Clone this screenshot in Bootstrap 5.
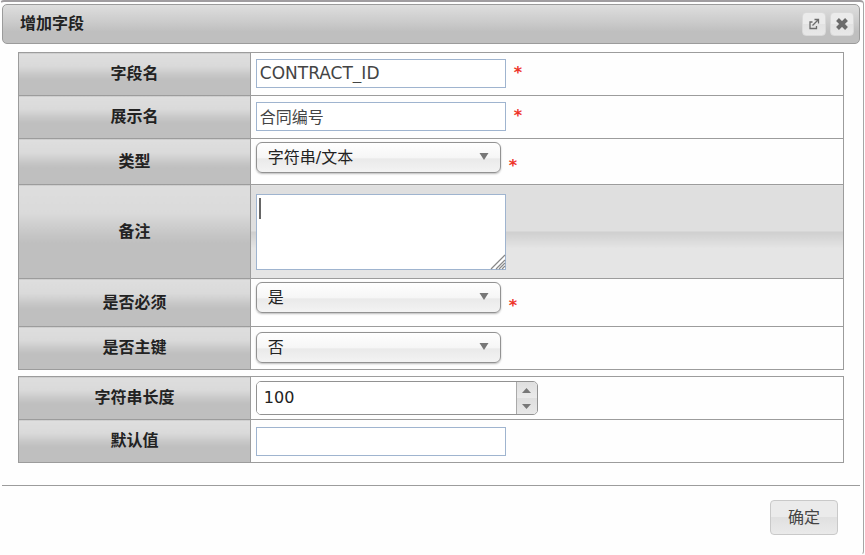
<!DOCTYPE html>
<html lang="zh-CN">
<head>
<meta charset="utf-8">
<meta name="viewport" content="width=device-width, initial-scale=1">
<title>增加字段</title>
<link href="https://cdn.jsdelivr.net/npm/bootstrap@5.3.0/dist/css/bootstrap.min.css" rel="stylesheet">
<style>
body { font-family: "DejaVu Sans", "Noto Sans CJK SC", sans-serif; font-size: 16px; line-height: 24px; color: #222; background: #fefefe; overflow: hidden; }
.dialog { border: 1px solid #a6a6a6; border-top: 2px solid #a09da0; border-left-color: #fefefe; border-bottom-color: #fefefe; border-radius: 4px; margin-right: 1px; padding: 2px 3px 19px 1px; }
.title-bar { height: 40px; padding: 0 5px 0 17px; border: 1px solid #9b9b9b; border-radius: 5px; background: linear-gradient(#dedede, #cbcbcb 45%, #bfbfbf 70%, #bfbfbf); }
.title-bar h1 { font-size: 16px; line-height: 24px; font-weight: 700; }
.icon-btn { width: 24px; height: 24px; border: 1px solid #d9d9d9; border-radius: 4px; background: linear-gradient(#ebebeb 50%, #e2e2e2 50%, #e8e8e8); }
.form-body { padding: 8px 16px 22px 16px; gap: 6px; }
.field-table { border-collapse: collapse; table-layout: fixed; color: #222; }
.field-table th, .field-table td { border: 1px solid #9c9c9c; padding: 0 5px; height: 43px; }
.field-table th { width: 28.1%; text-align: center; font-weight: 700; vertical-align: middle; background: linear-gradient(#dedede, #dadada 30%, #c8c8c8 50%, #bfbfbf 62%, #bfbfbf); }
.field-table .type-row td { height: 46px; }
.field-table .note-row td { height: 94px; background: linear-gradient(#dfdfdf 50%, #cfcfcf 50%, #e5e5e5 68%, #e5e5e5); }
.field-table .need-row td { height: 48px; }
.field-table td.cell-top { vertical-align: top; padding-top: 3px; }
.field-table td.cell-plain { padding-bottom: 2px; }
.text-field { width: 250px; height: 29px; padding: 0 3px; border: 1px solid #9fb4cf; background: #fff; color: #444; display: block; }
.latin-field { font-size: 17px; }
.note-wrap { width: 250px; }
.note-field { height: 76px; resize: none; }
.note-caret { left: 3px; top: 4px; width: 2px; height: 21px; background: #666; }
.note-grip { right: 0; bottom: 0; width: 16px; height: 16px; pointer-events: none; }
.pick-wrap { width: 245px; }
.pick { width: 100%; height: 31px; padding: 1px 30px 0 11px; border: 1px solid #929292; border-radius: 6px; appearance: none; background: linear-gradient(#fff, #f6f6f6 50%, #eaeaea 55%, #f3f3f3); box-shadow: 0 1px 2px #bbb; color: #222; display: block; }
.pick-arrow { right: 12px; top: 11px; width: 10px; height: 7px; pointer-events: none; }
.star { color: #ee3329; line-height: 24px; font-weight: 700; }
.spin { width: 282px; height: 34px; border: 1px solid #929292; border-radius: 5px; overflow: hidden; background: #fff; }
.spin input { border: 0; min-width: 0; padding: 0 7px; color: #222; background: #fff; appearance: textfield; }
.spin input::-webkit-inner-spin-button { appearance: none; }
.spin-keys { width: 21px; border-left: 1px solid #aaa; }
.spin-keys button { border: 0; background: linear-gradient(#dfdfdf, #eaeaea); }
.spin-keys button + button { background: linear-gradient(#dedede, #e8e8e8); }
.spin-keys svg, .icon-btn svg { display: block; }
.button-pane { border-top: 1px solid #9c9c9c; padding: 14px 22px 0 0; }
.ok-btn { width: 68px; height: 35px; border: 1px solid #c9c9c9; border-radius: 4px; background: linear-gradient(#ebebeb 50%, #e0e0e0 50%, #eaeaea); color: #444; padding: 0; }
</style>
<script src="https://cdn.jsdelivr.net/npm/bootstrap@5.3.0/dist/js/bootstrap.bundle.min.js"></script>
</head>
<body>
<form class="dialog">
  <header class="title-bar d-flex align-items-center">
    <h1 class="m-0 me-auto">增加字段</h1>
    <div class="d-flex gap-1">
      <button type="button" class="icon-btn p-0 d-flex align-items-center justify-content-center" aria-label="打开">
        <svg width="12" height="12" viewBox="0 0 12 12" fill="none" stroke="#6b6b6b" stroke-width="1.3"><path d="M4.500 4H2V10.500H8.500V8M4.500 7.500L10 2M6.500 1.500H10.500V5.500"/></svg>
      </button>
      <button type="button" class="icon-btn p-0 d-flex align-items-center justify-content-center" aria-label="关闭">
        <svg width="14" height="14" viewBox="0 0 14 14"><path d="M2.500 2.500L11.500 11.500M11.500 2.500L2.500 11.500" stroke="#6b6b6b" stroke-width="4"/></svg>
      </button>
    </div>
  </header>

  <div class="form-body d-flex flex-column">
    <table class="field-table w-100">
      <tr>
        <th scope="row"><label for="name">字段名</label></th>
        <td class="cell-plain"><div class="d-flex align-items-center gap-2"><input id="name" class="text-field latin-field" type="text" value="CONTRACT_ID"><span class="star">*</span></div></td>
      </tr>
      <tr>
        <th scope="row"><label for="title">展示名</label></th>
        <td class="cell-plain"><div class="d-flex align-items-center gap-2"><input id="title" class="text-field" type="text" value="合同编号"><span class="star">*</span></div></td>
      </tr>
      <tr class="type-row">
        <th scope="row"><label for="type">类型</label></th>
        <td class="cell-top"><div class="d-flex gap-2">
          <div class="pick-wrap position-relative"><select id="type" class="pick"><option>字符串/文本</option></select><svg class="pick-arrow position-absolute" viewBox="0 0 10 7"><path d="M0.500 0H9.500L5 7Z" fill="#777"/></svg></div>
          <span class="star pt-2 mt-1">*</span></div></td>
      </tr>
      <tr class="note-row">
        <th scope="row"><label for="note">备注</label></th>
        <td><div class="note-wrap position-relative"><textarea id="note" class="text-field note-field"></textarea><span class="note-caret position-absolute"></span><svg class="note-grip position-absolute" viewBox="0 0 16 16" fill="none" stroke="#888" stroke-width="1.2"><path d="M1 15L15 1M6 15L15 6M9 15L15 9M12 15L15 12"/></svg></div></td>
      </tr>
      <tr class="need-row">
        <th scope="row"><label for="need">是否必须</label></th>
        <td class="cell-top"><div class="d-flex gap-2">
          <div class="pick-wrap position-relative"><select id="need" class="pick"><option>是</option><option>否</option></select><svg class="pick-arrow position-absolute" viewBox="0 0 10 7"><path d="M0.500 0H9.500L5 7Z" fill="#777"/></svg></div>
          <span class="star pt-2 mt-1">*</span></div></td>
      </tr>
      <tr>
        <th scope="row"><label for="key">是否主键</label></th>
        <td class="cell-plain"><div class="pick-wrap position-relative"><select id="key" class="pick"><option>否</option><option>是</option></select><svg class="pick-arrow position-absolute" viewBox="0 0 10 7"><path d="M0.500 0H9.500L5 7Z" fill="#777"/></svg></div></td>
      </tr>
    </table>

    <table class="field-table w-100">
      <tr>
        <th scope="row"><label for="length">字符串长度</label></th>
        <td><div class="spin d-flex">
          <input id="length" class="flex-grow-1" type="number" value="100">
          <div class="spin-keys d-flex flex-column">
            <button type="button" class="flex-fill p-0 d-flex align-items-center justify-content-center" aria-label="增加"><svg width="9" height="5" viewBox="0 0 9 5"><path d="M4.500 0L9 5H0Z" fill="#777"/></svg></button>
            <button type="button" class="flex-fill p-0 d-flex align-items-center justify-content-center" aria-label="减少"><svg width="9" height="5" viewBox="0 0 9 5"><path d="M0 0H9L4.500 5Z" fill="#777"/></svg></button>
          </div></div></td>
      </tr>
      <tr>
        <th scope="row"><label for="default">默认值</label></th>
        <td><input id="default" class="text-field" type="text"></td>
      </tr>
    </table>
  </div>

  <footer class="button-pane d-flex justify-content-end">
    <button type="submit" class="ok-btn">确定</button>
  </footer>
</form>
</body>
</html>
